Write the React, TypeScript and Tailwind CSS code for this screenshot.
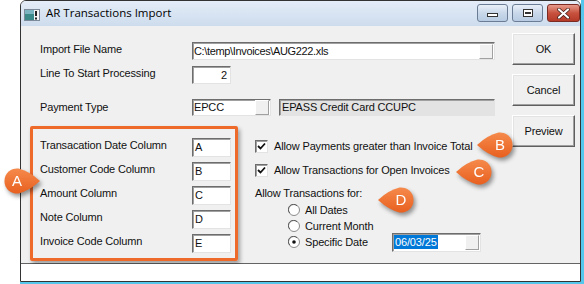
import React from "react";

const sunken =
  "border border-t-[#6d6d6d] border-l-[#6d6d6d] border-r-[#e3e3e3] border-b-[#e3e3e3] shadow-[inset_1px_1px_0_#a0a0a0]";
const raisedBtn =
  "border border-t-[#ffffff] border-l-[#ffffff] border-r-[#5f5f5f] border-b-[#5f5f5f] shadow-[inset_-1px_-1px_0_#a0a0a0,inset_1px_1px_0_#e3e3e3]";

function DropBtn() {
  return (
    <div className="w-[14px] h-[15px] bg-[#f0f0f0] border border-t-[#ffffff] border-l-[#ffffff] border-r-[#a0a0a0] border-b-[#a0a0a0] shrink-0" />
  );
}

function Check() {
  return (
    <div className={`w-[13px] h-[13px] bg-white ${sunken} flex items-center justify-center shrink-0`}>
      <svg width="9" height="9" viewBox="0 0 9 9">
        <path d="M1 4 L3.5 6.5 L8 1.5" stroke="#111" strokeWidth="1.8" fill="none" />
      </svg>
    </div>
  );
}

function Radio({ on }: { on?: boolean }) {
  return (
    <svg width="12" height="12" viewBox="0 0 12 12" className="shrink-0">
      <circle cx="6" cy="6" r="5.5" fill="#fff" stroke="#8a8a8a" />
      <path d="M1.8 9 A5 5 0 0 1 9 1.8" stroke="#5f5f5f" fill="none" strokeWidth="1" />
      {on && <circle cx="6" cy="6" r="1.8" fill="#111" />}
    </svg>
  );
}

function Callout({ letter, left, top, dir }: { letter: string; left: number; top: number; dir: "r" | "l" }) {
  return (
    <div
      className="absolute w-[42px] h-[28px] drop-shadow-[2px_3px_2px_rgba(0,0,0,0.4)]"
      style={{ left, top }}
    >
      <svg width="42" height="28" viewBox="0 0 42 28" className={dir === "l" ? "-scale-x-100" : ""}>
        <defs>
          <linearGradient id={`g${letter}`} x1="0" y1="0" x2="0" y2="1">
            <stop offset="0" stopColor="#f58a4c" />
            <stop offset="1" stopColor="#e8601f" />
          </linearGradient>
        </defs>
        <path
          d="M37 14 Q26 4 15.5 1.6 A12.5 12.5 0 1 0 15.5 26.4 Q26 24 37 14 Z"
          fill={`url(#g${letter})`}
        />
      </svg>
      <span
        className="absolute top-0 h-[28px] w-[28px] flex items-center justify-center text-white text-[15px] font-['Liberation_Sans',Arial,sans-serif]"
        style={{ left: dir === "r" ? 0 : 14 }}
      >
        {letter}
      </span>
    </div>
  );
}

export default function App() {
  const ui = "font-['Liberation_Sans',Arial,sans-serif] text-[11px] tracking-[-0.15px] text-[#111]";
  return (
    <div className="w-[584px] h-[284px] bg-white relative overflow-hidden">
      <div className="ml-[20px] w-[564px] h-[284px] border-r-[3px] border-b-[2px] border-[#55c6ec] flex">
        <div className="flex-1 flex flex-col border border-[#333] rounded-t-[6px] overflow-hidden">
          {/* title bar */}
          <div className="h-[25px] bg-gradient-to-b from-[#e4edf8] to-[#cddced] flex items-start shrink-0">
            <svg width="16" height="12" viewBox="0 0 16 12" className="ml-[3px] mt-[8px]">
              <rect x="0.5" y="0.5" width="15" height="11" fill="#f4f4f4" stroke="#7d8a99" />
              <rect x="1" y="1" width="9" height="10" fill="#3a8a8a" />
              <rect x="1" y="1" width="9" height="4" fill="#7bb5c2" />
              <rect x="11" y="2" width="2" height="5" fill="#222" />
              <rect x="11" y="8.5" width="2" height="2" fill="#222" />
            </svg>
            <span className="ml-[6px] mt-[4px] font-['Open_Sans',sans-serif] text-[11.5px] text-black leading-[16px]">
              AR Transactions Import
            </span>
            <div className="ml-auto flex gap-[4px] mt-[3px]">
              <div className="w-[31px] h-[18px] rounded-[3px] border border-[#6b7d95] bg-gradient-to-b from-[#e9f0f8] via-[#c9d8ea] to-[#b7cbe2] flex items-end justify-center pb-[4px]">
                <div className="w-[11px] h-[4px] bg-white border border-[#333]" />
              </div>
              <div className="w-[31px] h-[18px] rounded-[3px] border border-[#6b7d95] bg-gradient-to-b from-[#e9f0f8] via-[#c9d8ea] to-[#b7cbe2] flex items-center justify-center">
                <div className="w-[10px] h-[8px] bg-white border border-[#333] flex items-center justify-center">
                  <div className="w-[6px] h-[2px] border border-[#333]" />
                </div>
              </div>
              <div className="w-[33px] h-[18px] rounded-[3px] border border-[#7c2b22] bg-gradient-to-b from-[#e59a8c] via-[#c8523f] to-[#b53a28] flex items-center justify-center">
                <svg width="13" height="11" viewBox="0 0 13 11">
                  <path d="M2 1.5 L11 9.5 M11 1.5 L2 9.5" stroke="#3a1a14" strokeWidth="3.6" strokeLinecap="round" />
                  <path d="M2 1.5 L11 9.5 M11 1.5 L2 9.5" stroke="#fff" strokeWidth="2.2" strokeLinecap="round" />
                </svg>
              </div>
            </div>
          </div>

          {/* client area */}
          <div className={`h-[238px] bg-[#f0f0f0] border-b border-[#646464] flex pl-[19px] ${ui}`}>
            <div className="w-[472px] flex flex-col">
              <div className="mt-[16px] h-[18px] flex items-center">
                <span className="w-[152px] mb-[3px]">Import File Name</span>
                <div className={`w-[303px] h-[18px] bg-white ${sunken} flex items-center pl-[1px] pr-[1px]`}>
                  <span className="flex-1 tracking-[-0.35px]">C:\temp\Invoices\AUG222.xls</span>
                  <DropBtn />
                </div>
              </div>
              <div className="mt-[6px] h-[18px] flex items-center">
                <span className="w-[152px] mb-[3px]">Line To Start Processing</span>
                <div className={`w-[39px] h-[18px] bg-white ${sunken} flex items-center justify-end pr-[3px]`}>2</div>
              </div>
              <div className="mt-[15px] h-[17px] flex items-center">
                <span className="w-[152px] mb-[1px]">Payment Type</span>
                <div className={`w-[79px] h-[17px] bg-white ${sunken} flex items-center pl-[1px] pr-[1px]`}>
                  <span className="flex-1">EPCC</span>
                  <DropBtn />
                </div>
                <div className={`ml-[8px] w-[216px] h-[17px] bg-[#e3e3e3] ${sunken} flex items-center pl-[2px]`}>
                  EPASS Credit Card CCUPC
                </div>
              </div>
              <div className="mt-[10px] -ml-[10px] flex items-start">
                <div className="w-[208px] h-[135px] border-[3px] border-[#ee6a2b] rounded-[2px] shadow-[2px_3px_4px_rgba(0,0,0,0.35)] pl-[7px] pt-[9px] flex flex-col gap-[5px]">
                  {[
                    ["Transacation Date Column", "A"],
                    ["Customer Code Column", "B"],
                    ["Amount Column", "C"],
                    ["Note Column", "D"],
                    ["Invoice Code Column", "E"],
                  ].map(([l, v]) => (
                    <div key={l} className="h-[19px] flex items-center">
                      <span className="w-[152px] mb-[4px]">{l}</span>
                      <div className={`w-[39px] h-[19px] bg-white ${sunken} flex items-center pl-[2px]`}>{v}</div>
                    </div>
                  ))}
                </div>
                <div className="ml-[17px] flex flex-col">
                  <div className="mt-[14px] h-[13px] flex items-center gap-[6px]">
                    <Check />
                    <span>Allow Payments greater than Invoice Total</span>
                  </div>
                  <div className="mt-[11px] h-[13px] flex items-center gap-[6px]">
                    <Check />
                    <span>Allow Transactions for Open Invoices</span>
                  </div>
                  <div className="mt-[9px] h-[14px] flex items-center">Allow Transactions for:</div>
                  <div className="mt-[2px] pl-[33px] flex flex-col">
                    <div className="h-[16px] flex items-center gap-[5px]">
                      <Radio />
                      <span>All Dates</span>
                    </div>
                    <div className="h-[16px] flex items-center gap-[5px]">
                      <Radio />
                      <span>Current Month</span>
                    </div>
                    <div className="h-[16px] flex items-center gap-[5px]">
                      <Radio on />
                      <span className="w-[82px]">Specific Date</span>
                      <div className={`w-[89px] h-[19px] bg-white ${sunken} flex items-center pl-[1px] pr-[1px]`}>
                        <span className="bg-[#0078d7] text-white px-[1px] leading-[14px]">06/03/25</span>
                        <span className="flex-1" />
                        <DropBtn />
                      </div>
                    </div>
                  </div>
                </div>
              </div>
            </div>
            <div className="w-[63px] pt-[7px] flex flex-col gap-[9px]">
              <div className={`h-[32px] bg-[#f0f0f0] ${raisedBtn} flex items-center justify-center`}>OK</div>
              <div className={`h-[32px] bg-[#f0f0f0] ${raisedBtn} flex items-center justify-center`}>Cancel</div>
              <div className={`h-[32px] bg-[#f0f0f0] ${raisedBtn} flex items-center justify-center`}>Preview</div>
            </div>
          </div>
          <div className="flex-1 bg-white" />
        </div>
      </div>

      <Callout letter="A" left={3} top={167} dir="r" />
      <Callout letter="B" left={472} top={131} dir="l" />
      <Callout letter="C" left={451} top={158} dir="l" />
      <Callout letter="D" left={373} top={186} dir="l" />
    </div>
  );
}
